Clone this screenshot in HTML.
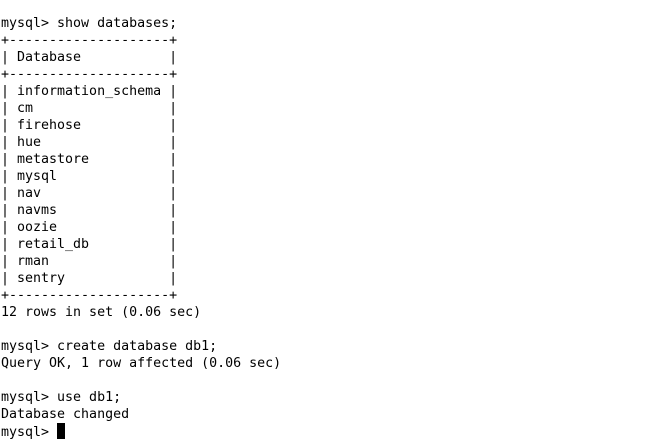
<!DOCTYPE html>
<html><head><style>
html,body{margin:0;padding:0;background:#fff;width:645px;height:445px;overflow:hidden}
pre{margin:0;position:absolute;left:1px;top:15px;font-family:"DejaVu Sans Mono","Liberation Mono",monospace;font-size:13.3px;line-height:17px;color:#000}
.c{display:inline-block;width:8px;height:16px;background:#000;vertical-align:-3px}
</style></head><body><pre>mysql&gt; show databases;
+--------------------+
| Database           |
+--------------------+
| information_schema |
| cm                 |
| firehose           |
| hue                |
| metastore          |
| mysql              |
| nav                |
| navms              |
| oozie              |
| retail_db          |
| rman               |
| sentry             |
+--------------------+
12 rows in set (0.06 sec)

mysql&gt; create database db1;
Query OK, 1 row affected (0.06 sec)

mysql&gt; use db1;
Database changed
mysql&gt; <span class="c"></span></pre></body></html>
